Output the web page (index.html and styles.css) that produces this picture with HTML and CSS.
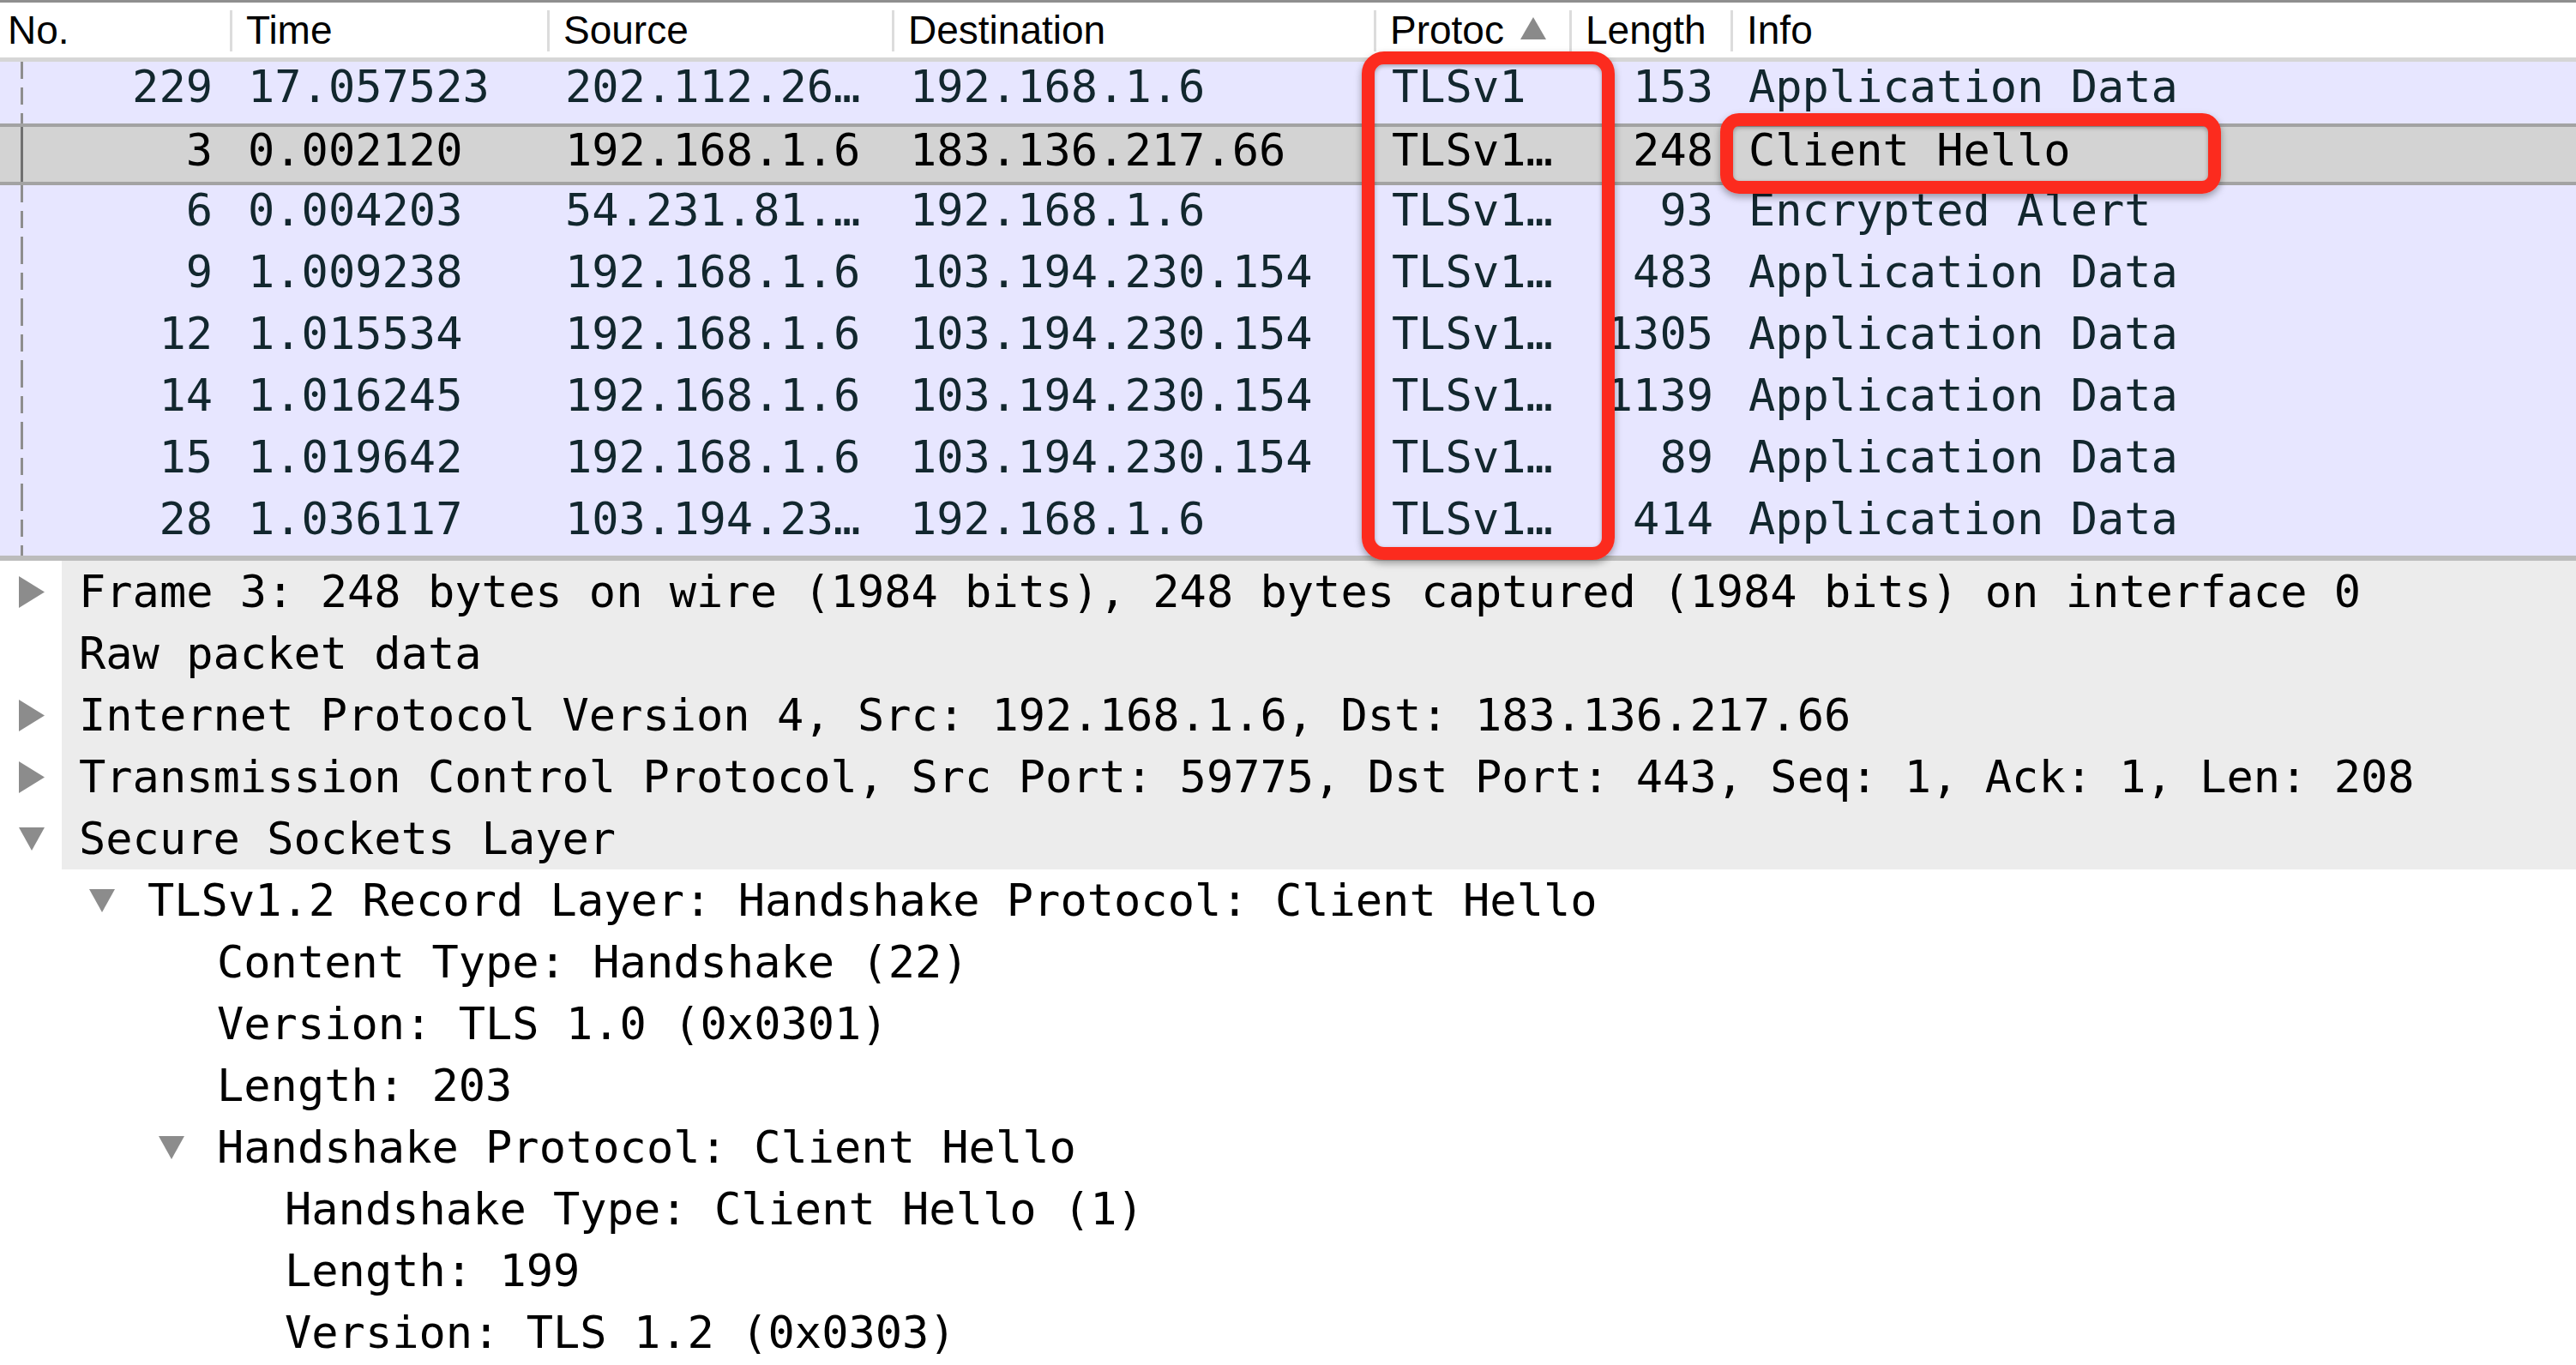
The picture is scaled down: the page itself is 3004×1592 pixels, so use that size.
FILE: index.html
```html
<!DOCTYPE html>
<html>
<head>
<meta charset="utf-8">
<title>Packets</title>
<link rel="stylesheet" href="styles.css">
</head>
<body>
<div class="app">
  <div class="list">
    <div class="hdr">
      <div class="hc hc-first">No.</div>
      <div class="hc">Time</div>
      <div class="hc">Source</div>
      <div class="hc">Destination</div>
      <div class="hc">Protoc<svg class="sort" width="30" height="26" viewBox="0 0 30 26"><path d="M15 0 L30 26 L0 26 Z" fill="#8a8a8a"/></svg></div>
      <div class="hc">Length</div>
      <div class="hc">Info</div>
    </div>

    <div class="row">
      <div class="c num">229</div><div class="c">17.057523</div><div class="c">202.112.26…</div><div class="c">192.168.1.6</div><div class="c">TLSv1</div><div class="c num">153</div><div class="c">Application Data</div>
    </div>
    <div class="row sel">
      <div class="c num">3</div><div class="c">0.002120</div><div class="c">192.168.1.6</div><div class="c">183.136.217.66</div><div class="c">TLSv1…</div><div class="c num">248</div><div class="c">Client Hello</div>
    </div>
    <div class="row">
      <div class="c num">6</div><div class="c">0.004203</div><div class="c">54.231.81.…</div><div class="c">192.168.1.6</div><div class="c">TLSv1…</div><div class="c num">93</div><div class="c">Encrypted Alert</div>
    </div>
    <div class="row">
      <div class="c num">9</div><div class="c">1.009238</div><div class="c">192.168.1.6</div><div class="c">103.194.230.154</div><div class="c">TLSv1…</div><div class="c num">483</div><div class="c">Application Data</div>
    </div>
    <div class="row">
      <div class="c num">12</div><div class="c">1.015534</div><div class="c">192.168.1.6</div><div class="c">103.194.230.154</div><div class="c">TLSv1…</div><div class="c num">1305</div><div class="c">Application Data</div>
    </div>
    <div class="row">
      <div class="c num">14</div><div class="c">1.016245</div><div class="c">192.168.1.6</div><div class="c">103.194.230.154</div><div class="c">TLSv1…</div><div class="c num">1139</div><div class="c">Application Data</div>
    </div>
    <div class="row">
      <div class="c num">15</div><div class="c">1.019642</div><div class="c">192.168.1.6</div><div class="c">103.194.230.154</div><div class="c">TLSv1…</div><div class="c num">89</div><div class="c">Application Data</div>
    </div>
    <div class="row">
      <div class="c num">28</div><div class="c">1.036117</div><div class="c">103.194.23…</div><div class="c">192.168.1.6</div><div class="c">TLSv1…</div><div class="c num">414</div><div class="c">Application Data</div>
    </div>
  </div>

  <div class="details">
    <div class="node hl">
      <span class="tog"><svg class="tri" width="30" height="37" viewBox="0 0 30 37"><path d="M0 0 L30 18.5 L0 37 Z"/></svg></span>
      <span class="lbl">Frame 3: 248 bytes on wire (1984 bits), 248 bytes captured (1984 bits) on interface 0</span>
    </div>
    <div class="node hl">
      <span class="tog"></span>
      <span class="lbl">Raw packet data</span>
    </div>
    <div class="node hl">
      <span class="tog"><svg class="tri" width="30" height="37" viewBox="0 0 30 37"><path d="M0 0 L30 18.5 L0 37 Z"/></svg></span>
      <span class="lbl">Internet Protocol Version 4, Src: 192.168.1.6, Dst: 183.136.217.66</span>
    </div>
    <div class="node hl">
      <span class="tog"><svg class="tri" width="30" height="37" viewBox="0 0 30 37"><path d="M0 0 L30 18.5 L0 37 Z"/></svg></span>
      <span class="lbl">Transmission Control Protocol, Src Port: 59775, Dst Port: 443, Seq: 1, Ack: 1, Len: 208</span>
    </div>
    <div class="node hl">
      <span class="tog"><svg class="tri" width="30" height="27" viewBox="0 0 30 27"><path d="M0 0 L30 0 L15 27 Z"/></svg></span>
      <span class="lbl">Secure Sockets Layer</span>
    </div>
    <div class="node lv2">
      <span class="tog"><svg class="tri" width="30" height="27" viewBox="0 0 30 27"><path d="M0 0 L30 0 L15 27 Z"/></svg></span>
      <span class="lbl">TLSv1.2 Record Layer: Handshake Protocol: Client Hello</span>
    </div>
    <div class="node lv3">
      <span class="tog"></span>
      <span class="lbl">Content Type: Handshake (22)</span>
    </div>
    <div class="node lv3">
      <span class="tog"></span>
      <span class="lbl">Version: TLS 1.0 (0x0301)</span>
    </div>
    <div class="node lv3">
      <span class="tog"></span>
      <span class="lbl">Length: 203</span>
    </div>
    <div class="node lv3">
      <span class="tog"><svg class="tri" width="30" height="27" viewBox="0 0 30 27"><path d="M0 0 L30 0 L15 27 Z"/></svg></span>
      <span class="lbl">Handshake Protocol: Client Hello</span>
    </div>
    <div class="node lv4">
      <span class="tog"></span>
      <span class="lbl">Handshake Type: Client Hello (1)</span>
    </div>
    <div class="node lv4">
      <span class="tog"></span>
      <span class="lbl">Length: 199</span>
    </div>
    <div class="node lv4">
      <span class="tog"></span>
      <span class="lbl">Version: TLS 1.2 (0x0303)</span>
    </div>
  </div>

  <div class="mark mark-proto"></div>
  <div class="mark mark-info"></div>
</div>
</body>
</html>
```

FILE: styles.css
```css
html, body {
  margin: 0;
  padding: 0;
  background: #ffffff;
}

.app {
  position: relative;
  width: 3004px;
  height: 1592px;
  overflow: hidden;
  background: #ffffff;
}

/* ---------- packet list ---------- */
.hdr,
.row {
  display: grid;
  grid-template-columns: 268px 370px 402px 562px 228px 188px 1fr;
}

.hdr {
  box-sizing: border-box;
  height: 72px;
  border-top: 3px solid #8f8f8f;
  border-bottom: 5px solid #d6d6d6;
  background: #ffffff;
  font-family: "Liberation Sans", Arial, sans-serif;
  font-size: 46px;
  color: #000000;
}

.hc {
  display: flex;
  align-items: center;
  padding-left: 19px;
  background-image: linear-gradient(#dcdcdc, #dcdcdc);
  background-size: 3px 48px;
  background-position: 0 9px;
  background-repeat: no-repeat;
  white-space: nowrap;
}

.hc-first {
  padding-left: 9px;
  background-image: none;
}

.sort {
  margin-left: 19px;
  margin-top: -4px;
}

.row {
  box-sizing: border-box;
  height: 72px;
  background-color: #e7e6ff;
  background-image: repeating-linear-gradient(to bottom, #8e8e8e 0 20px, transparent 20px 30px);
  background-size: 3px 100%;
  background-position: 24px 0;
  background-repeat: no-repeat;
  font-family: "DejaVu Sans Mono", "Liberation Mono", monospace;
  font-size: 52px;
  color: #12272e;
}

.row.sel {
  background-color: #d3d3d3;
  background-image: linear-gradient(#707070, #707070);
  border-top: 4px solid #a3a3a3;
  border-bottom: 4px solid #a3a3a3;
  color: #000000;
}

.c {
  line-height: 58px;
  padding-left: 21px;
  white-space: nowrap;
  overflow: visible;
}

.row.sel .c {
  line-height: 54px;
}

.c.num {
  text-align: right;
  padding-left: 0;
  padding-right: 20px;
}

/* ---------- details tree ---------- */
.details {
  border-top: 6px solid #bcbcbc;
  font-family: "DejaVu Sans Mono", "Liberation Mono", monospace;
  font-size: 52px;
  color: #000000;
}

.node {
  display: flex;
  height: 72px;
  line-height: 72px;
  white-space: nowrap;
}

.tog {
  flex: none;
  width: 72px;
  display: flex;
  align-items: center;
}

.tri {
  margin-left: 22px;
  fill: #8c8c8c;
}

.lbl {
  flex: 1;
  padding-left: 20px;
}

.node.hl .lbl {
  background: #ececec;
}

.node.lv2 { padding-left: 80px; }
.node.lv3 { padding-left: 161px; }
.node.lv4 { padding-left: 240px; }

.node.lv2 .tri,
.node.lv3 .tri {
  margin-left: 24px;
}

/* ---------- red annotation boxes ---------- */
.mark {
  position: absolute;
  box-sizing: border-box;
  border: 15px solid #fc2b1e;
  border-radius: 26px;
  box-shadow: 0 4px 8px rgba(0, 0, 0, 0.35), inset 0 2px 5px rgba(0, 0, 0, 0.3);
}

.mark-proto {
  left: 1588px;
  top: 60px;
  width: 295px;
  height: 593px;
}

.mark-info {
  left: 2006px;
  top: 132px;
  width: 584px;
  height: 94px;
  border-radius: 22px;
}
```
